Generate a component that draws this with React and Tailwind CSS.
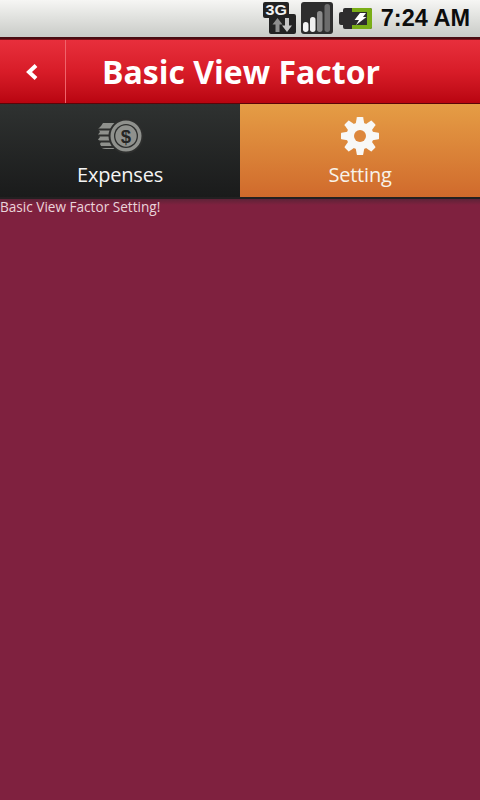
import React from 'react';

const ThreeGIcon = () => (
  <svg width="33" height="32" viewBox="0 0 33 32">
    <path d="M2 0h22q2 0 2 2v10h5q2 0 2 2v16q0 2-2 2H8q-2 0-2-2V16H2q-2 0-2-2V2q0-2 2-2z" fill="#232323" />
    <text x="2.500" y="12.500" fontSize="14" fontWeight="700" fill="#f2f2f2" fontFamily="'Liberation Sans', sans-serif" textLength="21.500" lengthAdjust="spacingAndGlyphs">3G</text>
    <path d="M9.500 22.500 14.500 16l5 6.500h-3V30h-4v-7.500z" fill="#8e8e8e" />
    <path d="M22 16h4v7.500h3L24 30l-5-6.500h3z" fill="#c6c6c6" />
  </svg>
);

const SignalIcon = () => (
  <svg width="32" height="32" viewBox="0 0 32 32">
    <rect width="32" height="32" rx="3" fill="#2e2e2e" />
    <rect x="2" y="20" width="5.500" height="10" rx="2.700" fill="#f4f4f4" />
    <rect x="9" y="15" width="5.500" height="15" rx="2.700" fill="#f0f0f0" />
    <rect x="16" y="9" width="5.500" height="21" rx="2.700" fill="#8c8c8c" />
    <rect x="23.500" y="2" width="5.500" height="28" rx="2.700" fill="#6c6c6c" />
  </svg>
);

const BatteryIcon = () => (
  <svg width="33" height="21" viewBox="0 0 33 21">
    <path d="M0 6q0-2 2-2h2V2q0-2 2-2h25q2 0 2 2v17q0 2-2 2H6q-2 0-2-2v-2H2q-2 0-2-2z" fill="#2d2d2d" />
    <path d="M13 0h18q2 0 2 2v17q0 2-2 2H13v-4h15V4H13z" fill="#7aae17" />
    <path d="M21 5h6l-3 4h3.500L17 17l3-5h-4.500z" fill="#fff" />
  </svg>
);

const CoinsIcon = () => (
  <svg width="46" height="36" viewBox="0 0 46 36">
    <path d="M5 5h20v26H8q-5 0-5-3l-1-2 1-2-3-2.500L2 19 0 16.500 2 14 0 11l3-3z" fill="#8f918d" />
    <g stroke="#2d2e2d" strokeWidth="1.800" fill="none">
      <path d="M0 11.500h14M0 17.500h13M1 23.500h13M3 29h15" />
    </g>
    <circle cx="28" cy="18" r="17.500" fill="#2d2e2d" />
    <circle cx="28" cy="18" r="15.500" fill="#8f918d" />
    <circle cx="28" cy="18" r="12" fill="#2d2e2d" />
    <circle cx="28" cy="18" r="10.700" fill="#8f918d" />
    <text x="28" y="24.500" textAnchor="middle" fontSize="18.500" fontWeight="700" fill="#252625" fontFamily="'Liberation Sans', sans-serif">$</text>
  </svg>
);

const GearIcon = () => {
  const teeth = [0, 45, 90, 135, 180, 225, 270, 315];
  return (
    <svg width="40" height="40" viewBox="0 0 40 40">
      <g fill="#f8f8f6">
        {teeth.map(a => (
          <path key={a} d="M15.500 9 L16.800 1.500 Q17 1 17.500 1 H22.500 Q23 1 23.200 1.500 L24.500 9z" transform={`rotate(${a} 20 20)`} />
        ))}
        <circle cx="20" cy="20" r="13.500" />
      </g>
      <circle cx="20" cy="20" r="6" fill="#dd873c" />
    </svg>
  );
};

export default function App() {
  return (
    <div className="h-[800px] w-[480px] overflow-hidden bg-[#7f213f] font-['Open_Sans',sans-serif]">
      {/* Status bar */}
      <div className="flex h-[39px] items-center justify-end border-b-2 border-[#4a0d12] bg-gradient-to-b from-[#f6f6f4] to-[#c9cbc7] pr-[10px]">
        <div className="mr-[5px] mt-[-1px]"><ThreeGIcon /></div>
        <div className="mr-[6px] mt-[-1px]"><SignalIcon /></div>
        <div className="mr-[9px] mt-[-1px]"><BatteryIcon /></div>
        <span className="font-['Liberation_Sans',sans-serif] text-[23.500px] leading-none font-bold text-[#0c0c0c]">7:24 AM</span>
      </div>

      {/* Title bar */}
      <div className="flex h-[65px] items-stretch border-b border-t border-b-[#5a0508] border-t-[#7e1018] bg-gradient-to-b from-[#e82f3c] via-[#d81c28] to-[#b90410]">
        <div className="flex w-[66px] items-center justify-center border-r border-[#f0636b]">
          <svg className="mr-[2px]" width="14" height="18" viewBox="0 0 14 18">
            <path d="M11 2.500 4 9l7 6.500" fill="none" stroke="#fff" strokeWidth="4" />
          </svg>
        </div>
        <h1 className="ml-[36px] self-center text-[32px] leading-none font-bold text-white">Basic View Factor</h1>
      </div>

      {/* Tabs */}
      <div className="flex h-[93px]">
        <div className="flex w-[240px] flex-col items-center bg-gradient-to-b from-[#2f3231] to-[#1a1b1b] pt-[14px]">
          <div className="ml-[2px]"><CoinsIcon /></div>
          <span className="mt-[6px] text-[20px] leading-[30px] tracking-[-0.200px] text-[#f4f4f4]">Expenses</span>
        </div>
        <div className="flex w-[240px] flex-col items-center bg-gradient-to-b from-[#e59d45] to-[#d06a2c] pt-[12px]">
          <GearIcon />
          <span className="mt-[4px] text-[20px] leading-[30px] tracking-[-0.200px] text-[#f8f3ea]">Setting</span>
        </div>
      </div>

      {/* Content */}
      <div className="border-t-2 border-[#232021] bg-gradient-to-b from-[#5e2237] to-[#7f213f] to-[6px]">
        <p className="text-[13.600px] leading-[16px] text-[#e8d5da]">Basic View Factor Setting!</p>
      </div>
    </div>
  );
}
